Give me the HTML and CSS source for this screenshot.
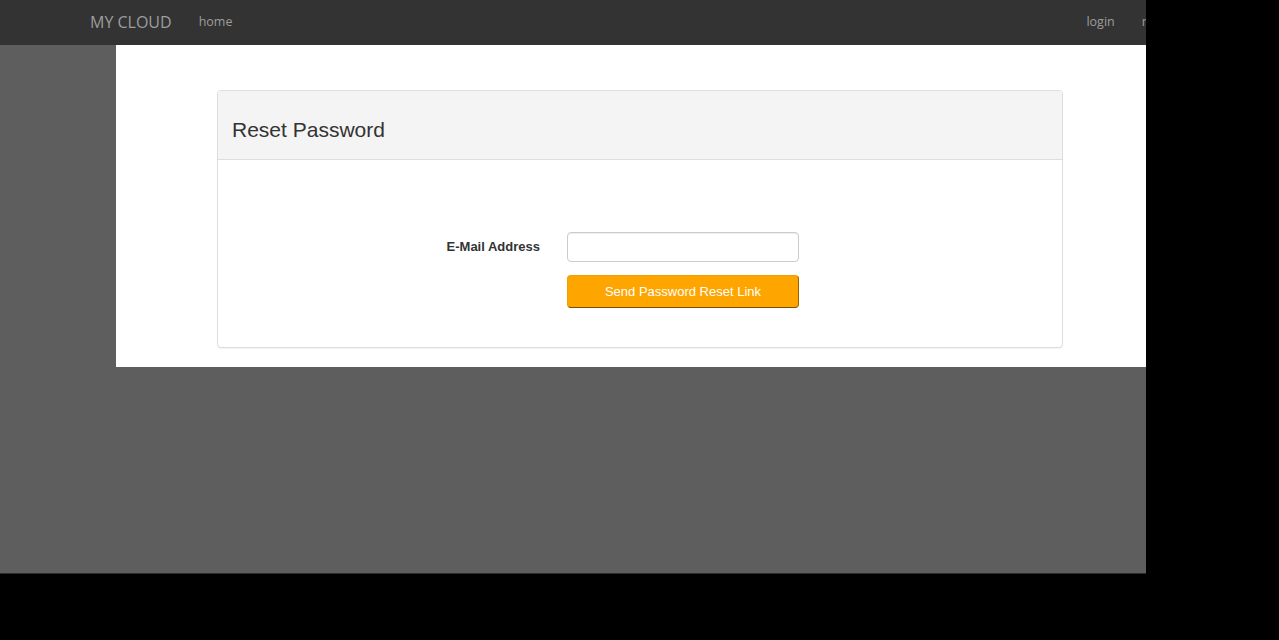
FILE: index.html
```html
<!DOCTYPE html>
<html>
<head>
<meta charset="utf-8">
<title>Reset Password</title>
<link rel="stylesheet" href="styles.css">
</head>
<body>
<div class="frame">
  <nav class="navbar">
    <div class="nav-inner">
      <a class="brand" href="#">MY CLOUD</a>
      <a class="nav-link home" href="#">home</a>
      <div class="nav-right">
        <a class="nav-link" href="#">login</a>
        <a class="nav-link" href="#">register</a>
      </div>
    </div>
  </nav>
  <main class="page">
    <section class="panel">
      <header class="panel-heading">
        <h3 class="panel-title">Reset Password</h3>
      </header>
      <div class="panel-body">
        <form class="form">
          <label class="label" for="email">E-Mail Address</label>
          <input class="input" id="email" type="email">
          <button class="btn" type="button">Send Password Reset Link</button>
        </form>
      </div>
    </section>
  </main>
</div>
</body>
</html>
```
FILE: styles.css
```css
html, body {
  margin: 0;
  padding: 0;
  background: #000;
}
.frame {
  width: 1146px;
  height: 573px;
  background: #5e5e5e;
  border-bottom: 1px solid #2a2a2a;
  overflow: hidden;
  box-sizing: content-box;
}
.navbar {
  height: 45px;
  background: #333333;
}
.nav-inner {
  width: 1300px;
  height: 45px;
  display: flex;
  align-items: center;
  padding: 0 0 1px 90px;
  box-sizing: border-box;
  font-family: "Open Sans", "Liberation Sans", sans-serif;
}
.brand {
  color: #9d9d9d;
  font-size: 16px;
  text-decoration: none;
  line-height: 20px;
}
.nav-link {
  color: #9d9d9d;
  font-size: 12.5px;
  text-decoration: none;
  line-height: 20px;
}
.home {
  margin-left: 27px;
}
.nav-right {
  margin-left: 854px;
  display: flex;
  gap: 27px;
}
.page {
  width: 1170px;
  margin-left: 116px;
  background: #fff;
  padding: 45px 0 19px 101px;
  box-sizing: border-box;
}
.panel {
  width: 846px;
  border: 1px solid #dddddd;
  border-radius: 4px;
  background: #fff;
  box-shadow: 0 1px 1px rgba(0, 0, 0, 0.05);
  box-sizing: border-box;
  font-family: "Liberation Sans", Arial, sans-serif;
  color: #333;
}
.panel-heading {
  height: 69px;
  background: #f4f4f4;
  border-bottom: 1px solid #dddddd;
  border-radius: 3px 3px 0 0;
  padding: 27px 14px 0;
  box-sizing: border-box;
}
.panel-title {
  margin: 0;
  font-size: 21px;
  font-weight: normal;
  line-height: 23px;
  color: #333;
}
.panel-body {
  padding: 72px 0 39px;
}
.form {
  display: grid;
  grid-template-columns: 322px 232px;
  column-gap: 27px;
  row-gap: 13px;
  align-items: center;
}
.label {
  text-align: right;
  font-weight: bold;
  font-size: 13px;
  line-height: 16px;
  padding-bottom: 1px;
  color: #333;
}
.input {
  grid-column: 2;
  height: 30px;
  border: 1px solid #cccccc;
  border-radius: 4px;
  box-sizing: border-box;
  box-shadow: inset 0 1px 1px rgba(0, 0, 0, 0.075);
  margin: 0;
  padding: 4px 10px;
}
.btn {
  grid-column: 2;
  height: 33px;
  background: #ffa500;
  color: #fff;
  border: 1px solid #f0a000;
  border-right-color: #9a6400;
  border-bottom-color: #7a5000;
  border-radius: 4px;
  font-family: "Liberation Sans", Arial, sans-serif;
  font-size: 13px;
  margin: 0;
  padding: 0;
  box-sizing: border-box;
}
```
